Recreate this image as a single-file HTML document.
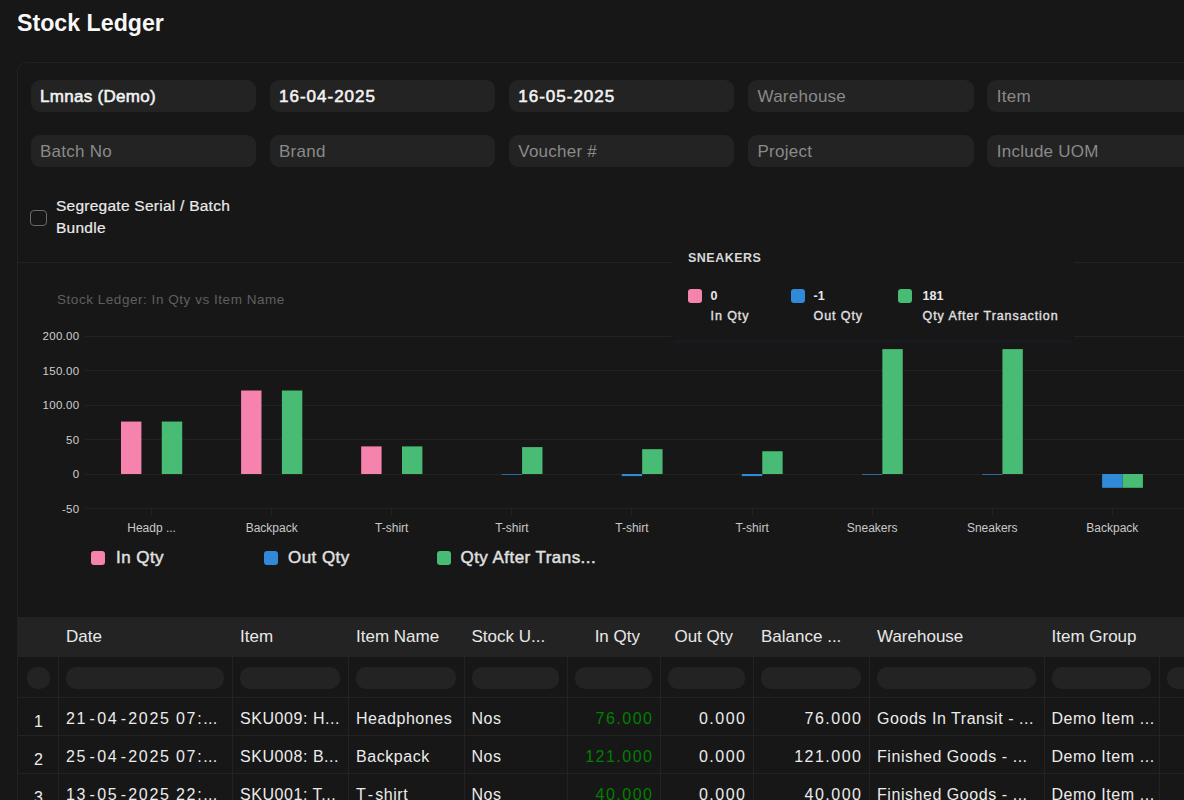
<!DOCTYPE html>
<html><head><meta charset="utf-8">
<style>
*{box-sizing:border-box;margin:0;padding:0}
html,body{width:1184px;height:800px;overflow:hidden;background:#171717;font-family:"Liberation Sans",sans-serif;color:#f3f3f3}
.abs{position:absolute}
.title{left:17px;top:10px;font-size:23.2px;font-weight:bold;color:#f8f8f8;white-space:nowrap}
.card{left:17px;top:62px;width:1300px;height:900px;border:1px solid #222;border-radius:10px}
.inp{position:absolute;height:32px;width:225.5px;background:#232323;border-radius:9px;font-size:17px;letter-spacing:0.25px;line-height:32px;padding-left:9.5px;padding-top:1px;white-space:nowrap;color:#8a8a8a}
.inp.v{color:#f3f3f3;font-weight:normal;-webkit-text-stroke:0.55px #f3f3f3;letter-spacing:0.3px;padding-top:0.5px}
.inp.d{letter-spacing:1px}
.chk{left:30px;top:209.5px;width:17px;height:16px;border:1px solid #6a6a6a;border-radius:4px}
.chkl{left:56px;top:194.6px;-webkit-text-stroke:0.2px #eaeaea;font-size:15.5px;letter-spacing:0.25px;line-height:22.5px;color:#eaeaea;white-space:nowrap}
.divider{left:18px;top:262px;width:1180px;height:1px;background:#222}
.ctitle{left:57px;top:292px;font-size:13.5px;letter-spacing:0.54px;color:#5f5f5f;white-space:nowrap}
.yl{font-size:11.5px;fill:#cfcfcf;letter-spacing:0.3px}
.xl{font-size:12px;fill:#c8c8c8}
.leg{position:absolute;top:548px;font-size:17px;letter-spacing:0.45px;font-weight:normal;-webkit-text-stroke:0.45px #e0e0e0;color:#e0e0e0;white-space:nowrap;line-height:20px}
.sq{position:absolute;width:14px;height:14px;border-radius:3px;top:551px}
.tip{left:671px;top:237px;width:403px;height:106px;background:#171717}
.tiph{left:688px;top:251px;font-size:12.5px;font-weight:bold;color:#d8d8d8;letter-spacing:0.5px}
.tsq{position:absolute;width:14px;height:14px;border-radius:3px;top:289px}
.tv{position:absolute;top:289px;font-size:12.5px;font-weight:bold;color:#e8e8e8;line-height:14px;white-space:nowrap}
.tl{position:absolute;top:309px;letter-spacing:0.92px;font-size:12.5px;font-weight:normal;-webkit-text-stroke:0.35px #e0e0e0;color:#e0e0e0;line-height:14px;white-space:nowrap}
.th{position:absolute;top:617px;height:40px;line-height:40px;font-size:17px;color:#e8e8e8;white-space:nowrap;overflow:hidden}
.pill{top:667px;height:22px;border-radius:10px;background:#232323}
.td{position:absolute;height:38px;line-height:38px;padding-top:3px;font-size:16px;letter-spacing:0.55px;color:#ececec;white-space:nowrap}
.td.rn{text-align:center;line-height:38px;padding-top:6px;font-size:16px;letter-spacing:0}
.td.num{text-align:right;letter-spacing:1.5px;padding-right:0}
.hy{margin:0 2.3px;letter-spacing:0}
.hy2{margin:0 1.5px}
.dtc{letter-spacing:1.7px;word-spacing:-0.8px}
.dt{letter-spacing:0.2px}
.td.g{color:green}
</style></head><body>
<div class="abs title">Stock Ledger</div>
<div class="abs card"></div>

<div class="inp v" style="left:30.5px;top:80px">Lmnas (Demo)</div>
<div class="inp v d" style="left:269.5px;top:80px">16-04-2025</div>
<div class="inp v d" style="left:508.75px;top:80px">16-05-2025</div>
<div class="inp" style="left:748px;top:80px">Warehouse</div>
<div class="inp" style="left:987.25px;top:80px">Item</div>
<div class="inp" style="left:30.5px;top:135px">Batch No</div>
<div class="inp" style="left:269.5px;top:135px">Brand</div>
<div class="inp" style="left:508.75px;top:135px">Voucher #</div>
<div class="inp" style="left:748px;top:135px">Project</div>
<div class="inp" style="left:987.25px;top:135px">Include UOM</div>

<div class="abs chk"></div>
<div class="abs chkl">Segregate Serial / Batch<br>Bundle</div>
<div class="abs divider"></div>

<div class="abs ctitle">Stock Ledger: In Qty vs Item Name</div>
<svg class="abs" style="left:0;top:0" width="1184" height="800" font-family="Liberation Sans, sans-serif">
<line x1="85" y1="336.5" x2="1184" y2="336.5" stroke="#222222" stroke-width="1"/>
<text x="79.5" y="340.0" text-anchor="end" class="yl">200.00</text>
<line x1="85" y1="370.5" x2="1184" y2="370.5" stroke="#222222" stroke-width="1"/>
<text x="79.5" y="374.5" text-anchor="end" class="yl">150.00</text>
<line x1="85" y1="405.5" x2="1184" y2="405.5" stroke="#222222" stroke-width="1"/>
<text x="79.5" y="409.0" text-anchor="end" class="yl">100.00</text>
<line x1="85" y1="439.5" x2="1184" y2="439.5" stroke="#222222" stroke-width="1"/>
<text x="79.5" y="443.5" text-anchor="end" class="yl">50</text>
<line x1="85" y1="474.5" x2="1184" y2="474.5" stroke="#222222" stroke-width="1"/>
<text x="79.5" y="478.0" text-anchor="end" class="yl">0</text>
<line x1="85" y1="508.5" x2="1184" y2="508.5" stroke="#222222" stroke-width="1"/>
<text x="79.5" y="512.5" text-anchor="end" class="yl">-50</text>
<line x1="151.5" y1="508" x2="151.5" y2="515" stroke="#222222" stroke-width="1"/>
<text x="151.6" y="532" text-anchor="middle" class="xl">Headp ...</text>
<line x1="271.5" y1="508" x2="271.5" y2="515" stroke="#222222" stroke-width="1"/>
<text x="271.69" y="532" text-anchor="middle" class="xl">Backpack</text>
<line x1="391.5" y1="508" x2="391.5" y2="515" stroke="#222222" stroke-width="1"/>
<text x="391.78" y="532" text-anchor="middle" class="xl">T-shirt</text>
<line x1="511.5" y1="508" x2="511.5" y2="515" stroke="#222222" stroke-width="1"/>
<text x="511.87" y="532" text-anchor="middle" class="xl">T-shirt</text>
<line x1="631.5" y1="508" x2="631.5" y2="515" stroke="#222222" stroke-width="1"/>
<text x="631.96" y="532" text-anchor="middle" class="xl">T-shirt</text>
<line x1="752.5" y1="508" x2="752.5" y2="515" stroke="#222222" stroke-width="1"/>
<text x="752.0500000000001" y="532" text-anchor="middle" class="xl">T-shirt</text>
<line x1="872.5" y1="508" x2="872.5" y2="515" stroke="#222222" stroke-width="1"/>
<text x="872.14" y="532" text-anchor="middle" class="xl">Sneakers</text>
<line x1="992.5" y1="508" x2="992.5" y2="515" stroke="#222222" stroke-width="1"/>
<text x="992.23" y="532" text-anchor="middle" class="xl">Sneakers</text>
<line x1="1112.5" y1="508" x2="1112.5" y2="515" stroke="#222222" stroke-width="1"/>
<text x="1112.32" y="532" text-anchor="middle" class="xl">Backpack</text>
<rect x="121.00" y="421.56" width="20.4" height="52.44" fill="#F683AE"/>
<rect x="161.80" y="421.56" width="20.4" height="52.44" fill="#48BB74"/>
<rect x="241.09" y="390.51" width="20.4" height="83.49" fill="#F683AE"/>
<rect x="281.89" y="390.51" width="20.4" height="83.49" fill="#48BB74"/>
<rect x="361.18" y="446.40" width="20.4" height="27.60" fill="#F683AE"/>
<rect x="401.98" y="446.40" width="20.4" height="27.60" fill="#48BB74"/>
<rect x="501.67" y="474.00" width="20.4" height="0.69" fill="#318AD8"/>
<rect x="522.07" y="447.09" width="20.4" height="26.91" fill="#48BB74"/>
<rect x="621.76" y="474.00" width="20.4" height="2.07" fill="#318AD8"/>
<rect x="642.16" y="449.16" width="20.4" height="24.84" fill="#48BB74"/>
<rect x="741.85" y="474.00" width="20.4" height="2.07" fill="#318AD8"/>
<rect x="762.25" y="451.23" width="20.4" height="22.77" fill="#48BB74"/>
<rect x="861.94" y="474.00" width="20.4" height="0.69" fill="#318AD8"/>
<rect x="882.34" y="349.11" width="20.4" height="124.89" fill="#48BB74"/>
<rect x="982.03" y="474.00" width="20.4" height="0.69" fill="#318AD8"/>
<rect x="1002.43" y="349.11" width="20.4" height="124.89" fill="#48BB74"/>
<rect x="1102.12" y="474.00" width="20.4" height="13.80" fill="#318AD8"/>
<rect x="1122.52" y="474.00" width="20.4" height="13.80" fill="#48BB74"/>
</svg>

<div class="sq" style="left:91px;background:#F683AE"></div><div class="leg" style="left:116px">In Qty</div>
<div class="sq" style="left:264px;background:#318AD8"></div><div class="leg" style="left:288px">Out Qty</div>
<div class="sq" style="left:436.5px;background:#48BB74"></div><div class="leg" style="left:460.5px">Qty After Trans...</div>

<div class="abs tip"></div>
<div class="abs tiph">SNEAKERS</div>
<div class="tsq" style="left:688px;background:#F683AE"></div><div class="tv" style="left:710.5px">0</div><div class="tl" style="left:710.5px">In Qty</div>
<div class="tsq" style="left:791px;background:#318AD8"></div><div class="tv" style="left:813.5px">-1</div><div class="tl" style="left:813.5px">Out Qty</div>
<div class="tsq" style="left:898px;background:#48BB74"></div><div class="tv" style="left:922.5px">181</div><div class="tl" style="left:922.5px">Qty After Transaction</div>
<div class="abs" style="left:675px;top:340px;width:395px;height:3px;background:#171b21"></div>

<div class="abs" style="left:18px;top:617px;width:1170px;height:40px;background:#232323"></div>
<div class="th" style="left:66px;width:158px">Date</div>
<div class="th" style="left:240px;width:100px">Item</div>
<div class="th" style="left:356px;width:99.5px">Item Name</div>
<div class="th" style="left:471.5px;width:87.5px">Stock U...</div>
<div class="th" style="left:575px;width:65px;text-align:right">In Qty</div>
<div class="th" style="left:668px;width:65px;text-align:right">Out Qty</div>
<div class="th" style="left:761px;width:100px">Balance ...</div>
<div class="th" style="left:877px;width:158.5px">Warehouse</div>
<div class="th" style="left:1051.5px;width:99.0px">Item Group</div>
<div class="abs" style="left:18px;top:697px;width:1170px;height:1px;background:#232323"></div>
<div class="abs" style="left:18px;top:735px;width:1170px;height:1px;background:#232323"></div>
<div class="abs" style="left:18px;top:773px;width:1170px;height:1px;background:#232323"></div>
<div class="abs" style="left:58px;top:657px;width:1px;height:150px;background:#232323"></div>
<div class="abs" style="left:232px;top:657px;width:1px;height:150px;background:#232323"></div>
<div class="abs" style="left:348px;top:657px;width:1px;height:150px;background:#232323"></div>
<div class="abs" style="left:463.5px;top:657px;width:1px;height:150px;background:#232323"></div>
<div class="abs" style="left:567px;top:657px;width:1px;height:150px;background:#232323"></div>
<div class="abs" style="left:660px;top:657px;width:1px;height:150px;background:#232323"></div>
<div class="abs" style="left:753px;top:657px;width:1px;height:150px;background:#232323"></div>
<div class="abs" style="left:869px;top:657px;width:1px;height:150px;background:#232323"></div>
<div class="abs" style="left:1043.5px;top:657px;width:1px;height:150px;background:#232323"></div>
<div class="abs" style="left:1158.5px;top:657px;width:1px;height:150px;background:#232323"></div>
<div class="abs pill" style="left:27px;width:23px"></div>
<div class="abs pill" style="left:66px;width:158px"></div>
<div class="abs pill" style="left:240px;width:100px"></div>
<div class="abs pill" style="left:356px;width:99.5px"></div>
<div class="abs pill" style="left:471.5px;width:87.5px"></div>
<div class="abs pill" style="left:575px;width:77px"></div>
<div class="abs pill" style="left:668px;width:77px"></div>
<div class="abs pill" style="left:761px;width:100px"></div>
<div class="abs pill" style="left:877px;width:158.5px"></div>
<div class="abs pill" style="left:1051.5px;width:99.0px"></div>
<div class="abs pill" style="left:1166.5px;width:125.5px"></div>
<div class="td rn" style="left:19px;width:39px;top:697px">1</div>
<div class="td dtc" style="left:66px;width:158px;top:697px">21<span class=hy>-</span>04<span class=hy>-</span>2025 07:<span class=dt>...</span></div>
<div class="td" style="left:240px;width:100px;top:697px">SKU009: H...</div>
<div class="td" style="left:356px;width:99.5px;top:697px">Headphones</div>
<div class="td" style="left:471.5px;width:87.5px;top:697px">Nos</div>
<div class="td num g" style="left:575px;width:77px;top:697px"><span style="margin-right:-1.5px">76.000</span></div>
<div class="td num" style="left:668px;width:77px;top:697px"><span style="margin-right:-1.5px">0.000</span></div>
<div class="td num" style="left:761px;width:100px;top:697px"><span style="margin-right:-1.5px">76.000</span></div>
<div class="td" style="left:877px;width:158.5px;top:697px">Goods In Transit - ...</div>
<div class="td" style="left:1051.5px;width:99.0px;top:697px">Demo Item ...</div>
<div class="td rn" style="left:19px;width:39px;top:735px">2</div>
<div class="td dtc" style="left:66px;width:158px;top:735px">25<span class=hy>-</span>04<span class=hy>-</span>2025 07:<span class=dt>...</span></div>
<div class="td" style="left:240px;width:100px;top:735px">SKU008: B...</div>
<div class="td" style="left:356px;width:99.5px;top:735px">Backpack</div>
<div class="td" style="left:471.5px;width:87.5px;top:735px">Nos</div>
<div class="td num g" style="left:575px;width:77px;top:735px"><span style="margin-right:-1.5px">121.000</span></div>
<div class="td num" style="left:668px;width:77px;top:735px"><span style="margin-right:-1.5px">0.000</span></div>
<div class="td num" style="left:761px;width:100px;top:735px"><span style="margin-right:-1.5px">121.000</span></div>
<div class="td" style="left:877px;width:158.5px;top:735px">Finished Goods - ...</div>
<div class="td" style="left:1051.5px;width:99.0px;top:735px">Demo Item ...</div>
<div class="td rn" style="left:19px;width:39px;top:773px">3</div>
<div class="td dtc" style="left:66px;width:158px;top:773px">13<span class=hy>-</span>05<span class=hy>-</span>2025 22:<span class=dt>...</span></div>
<div class="td" style="left:240px;width:100px;top:773px">SKU001: T...</div>
<div class="td" style="left:356px;width:99.5px;top:773px">T<span class=hy2>-</span>shirt</div>
<div class="td" style="left:471.5px;width:87.5px;top:773px">Nos</div>
<div class="td num g" style="left:575px;width:77px;top:773px"><span style="margin-right:-1.5px">40.000</span></div>
<div class="td num" style="left:668px;width:77px;top:773px"><span style="margin-right:-1.5px">0.000</span></div>
<div class="td num" style="left:761px;width:100px;top:773px"><span style="margin-right:-1.5px">40.000</span></div>
<div class="td" style="left:877px;width:158.5px;top:773px">Finished Goods - ...</div>
<div class="td" style="left:1051.5px;width:99.0px;top:773px">Demo Item ...</div>
</body></html>
